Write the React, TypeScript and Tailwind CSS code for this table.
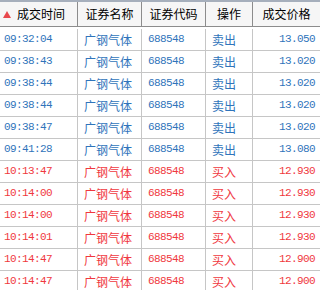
const trades = [
  { time: '09:32:04', side: '卖出', price: '13.050' },
  { time: '09:38:43', side: '卖出', price: '13.020' },
  { time: '09:38:44', side: '卖出', price: '13.020' },
  { time: '09:38:44', side: '卖出', price: '13.020' },
  { time: '09:38:47', side: '卖出', price: '13.020' },
  { time: '09:41:28', side: '卖出', price: '13.080' },
  { time: '10:13:47', side: '买入', price: '12.930' },
  { time: '10:14:00', side: '买入', price: '12.930' },
  { time: '10:14:00', side: '买入', price: '12.930' },
  { time: '10:14:01', side: '买入', price: '12.930' },
  { time: '10:14:47', side: '买入', price: '12.900' },
  { time: '10:14:47', side: '买入', price: '12.900' },
];

const cols = 'grid grid-cols-[78px_64px_64px_47px_67px]';
const cjk = "font-['Noto_Sans_CJK_SC',sans-serif] text-[12px]";
const mono = "font-['Liberation_Mono',monospace] text-[11px] tracking-[-0.6px]";

export default function App() {
  return (
    <div className="w-[320px] h-[290px] overflow-hidden bg-white">
      <div className={`${cols} h-[27px] border-t-2 border-b border-t-[#a6afbc] border-b-[#8c8c8c] bg-[#f6f6f6] text-black ${cjk}`}>
        <div className="flex items-center border-r border-[#8c8c8c] pl-[3px]">
          <svg width="8" height="7" viewBox="0 0 8 7" className="mr-[6px]">
            <polygon points="4,0 8,7 0,7" fill="#e8484d" />
          </svg>
          <span>成交时间</span>
        </div>
        <div className="flex items-center justify-center border-r border-[#8c8c8c]">证券名称</div>
        <div className="flex items-center justify-center border-r border-[#8c8c8c]">证券代码</div>
        <div className="flex items-center justify-center border-r border-[#8c8c8c]">操作</div>
        <div className="flex items-center justify-center">成交价格</div>
      </div>
      <div className="pt-[2px]">
        {trades.map((t, i) => {
          const color = t.side === '卖出' ? 'text-[#2f74bb]' : 'text-[#f0383e]';
          return (
            <div key={i} className={`${cols} h-[22px] border-b border-[#c6c6c6] ${color}`}>
              <div className={`flex items-center border-r border-[#c6c6c6] pl-[4px] ${mono}`}>{t.time}</div>
              <div className={`flex items-center border-r border-[#c6c6c6] pl-[6px] ${cjk}`}>广钢气体</div>
              <div className={`flex items-center border-r border-[#c6c6c6] pl-[6px] ${mono}`}>688548</div>
              <div className={`flex items-center border-r border-[#c6c6c6] pl-[6px] ${cjk}`}>{t.side}</div>
              <div className={`flex items-center justify-end pr-[5px] ${mono}`}>{t.price}</div>
            </div>
          );
        })}
      </div>
    </div>
  );
}
